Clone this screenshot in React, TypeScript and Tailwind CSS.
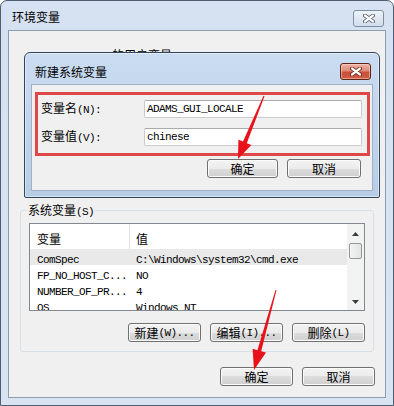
import type { ReactNode } from 'react'
import clsx from 'clsx'

const cjk = "font-['Noto_Sans_CJK_SC',sans-serif] text-[12px] leading-[14px] text-black"

// SimSun-like half width latin: 6px per char
function M({ children }: { children: ReactNode }) {
  return (
    <span className="font-['Liberation_Mono',monospace] text-[11px] tracking-[-0.6px]">
      {children}
    </span>
  )
}

function Button({ children, className }: { children: ReactNode; className?: string }) {
  return (
    <button
      className={clsx(
        'flex h-[19px] items-center justify-center whitespace-nowrap rounded-[3px] border border-[#707070]',
        'bg-[linear-gradient(#f3f3f3_0%,#ebebeb_50%,#dddddd_50%,#cfcfcf_100%)] shadow-[inset_0_0_0_1px_#fbfbfb]',
        cjk,
        className,
      )}
    >
      {children}
    </button>
  )
}

function CloseX({ outline }: { outline: string }) {
  return (
    <svg width="12" height="9" viewBox="0 0 12 9">
      <path d="M2 1.5 L10 7.5 M10 1.5 L2 7.5" stroke={outline} strokeWidth="4" strokeLinecap="round" />
      <path d="M2 1.5 L10 7.5 M10 1.5 L2 7.5" stroke="#fff" strokeWidth="2.2" strokeLinecap="round" />
    </svg>
  )
}

const rows = [
  ['ComSpec', 'C:\\Windows\\system32\\cmd.exe'],
  ['FP_NO_HOST_C...', 'NO'],
  ['NUMBER_OF_PR...', '4'],
  ['OS', 'Windows_NT'],
]

function NewVariableDialog() {
  return (
    <div className="absolute left-[23px] top-[51px] flex h-[146px] w-[356px] flex-col rounded-t-[6px] rounded-b-[2px] border border-[#34445a] bg-gradient-to-b from-[#cadcf1] to-[#b7cde7] px-[6px] pb-[6px] shadow-[inset_0_0_0_1px_rgba(255,255,255,0.45)]">
      <div className="flex h-[31px] items-start justify-between">
        <span className={clsx(cjk, 'pl-[4px] pt-[12px]')}>新建系统变量</span>
        <div className="mr-[2px] mt-[10px] flex h-[17px] w-[31px] items-center justify-center rounded-[3px] border border-[#5e2418] bg-[linear-gradient(#eeb4a6_0%,#df8b78_45%,#c9503a_55%,#cf5c44_100%)] shadow-[inset_0_0_0_1px_rgba(255,220,210,0.5)]">
          <CloseX outline="#6a2317" />
        </div>
      </div>
      <div className="flex flex-1 flex-col border border-[#9fb1c6] bg-[#f0f0f0] pl-[3px] pt-[7px]">
        <div className="flex h-[64px] w-[335px] flex-col gap-[10px] border-[3px] border-[#de4848] pl-[3px] pt-[5px]">
          <div className="flex items-center">
            <span className={clsx(cjk, 'w-[103px]')}>
              变量名<M>(N):</M>
            </span>
            <div className="flex h-[18px] w-[218px] items-center rounded-[2px] border border-[#c9cbce] border-t-[#a9abaf] bg-white pl-[2px]">
              <M>ADAMS_GUI_LOCALE</M>
            </div>
          </div>
          <div className="flex items-center">
            <span className={clsx(cjk, 'w-[103px]')}>
              变量值<M>(V):</M>
            </span>
            <div className="flex h-[18px] w-[218px] items-center rounded-[2px] border border-[#c9cbce] border-t-[#a9abaf] bg-white pl-[2px]">
              <M>chinese</M>
            </div>
          </div>
        </div>
        <div className="mt-[3px] flex justify-end gap-[9px] pr-[11px]">
          <Button className="w-[71px]">确定</Button>
          <Button className="w-[74px]">取消</Button>
        </div>
      </div>
    </div>
  )
}

function Arrows() {
  return (
    <svg className="pointer-events-none absolute left-[-1px] top-[-1px]" width="394" height="406">
      <polygon
        points="263.5,95.8 243,141.6 238.4,139.7 238,159 251.4,145.1 246.8,143.2 264.5,96.2"
        fill="#e8121b"
      />
      <polygon
        points="275.5,289.9 257.4,350.2 252.6,348.8 254,370 266,352.6 261.2,351.2 276.5,290.1"
        fill="#e8121b"
      />
    </svg>
  )
}

export default function App() {
  return (
    <div className="relative flex h-[406px] w-[394px] flex-col rounded-t-[7px] border border-[#4e5d70] bg-gradient-to-b from-[#d6e2f1] to-[#d9e4f2] px-[7px] pb-[7px]">
      <div className="flex h-[29px] items-start justify-between">
        <span className={clsx(cjk, 'pl-[4px] pt-[9px]')}>环境变量</span>
        <div className="mr-[2px] mt-[9px] flex h-[17px] w-[31px] items-center justify-center rounded-[3px] border border-[#7d8ea3] bg-gradient-to-b from-[#eef3f9] to-[#d2dceb]">
          <CloseX outline="#505c6b" />
        </div>
      </div>

      <div className="flex flex-1 flex-col border border-[#8d9cae] bg-[#f0f0f0]">
        <div className={clsx(cjk, 'h-[179px] pl-[19px] pt-[17px]')}>
          <M>Administrator </M>的用户变量<M>(U)</M>
        </div>

        <div className="relative mx-[11px] rounded-[3px] border border-[#d5dfe5] px-[8px] pb-[9px] pt-[12px]">
          <span className={clsx(cjk, 'absolute -top-[8px] left-[6px] bg-[#f0f0f0] px-[1px]')}>
            系统变量<M>(S)</M>
          </span>
          <div className="flex h-[88px] border border-[#828790] bg-white">
            <div className="flex min-w-0 flex-1 flex-col overflow-hidden">
              <div className="flex h-[25px] shrink-0">
                <span className={clsx(cjk, 'w-[99px] pl-[7px] pt-[8px]')}>变量</span>
                <span className="w-px bg-[#e3e3e3]" />
                <span className={clsx(cjk, 'pl-[6px] pt-[8px]')}>值</span>
              </div>
              {rows.map(([name, value], i) => (
                <div
                  key={name}
                  className={clsx('flex h-[16px] shrink-0 items-center whitespace-nowrap text-black', i === 0 && 'bg-[#e9e9e9]')}
                >
                  <span className="w-[100px] pl-[7px]">
                    <M>{name}</M>
                  </span>
                  <span className="pl-[6px]">
                    <M>{value}</M>
                  </span>
                </div>
              ))}
            </div>
            <div className="flex w-[17px] flex-col bg-[#f3f3f3] px-[2px]">
              <div className="flex h-[19px] items-center justify-center">
                <svg width="7" height="4" viewBox="0 0 7 4">
                  <path d="M0 4 L3.5 0 L7 4 Z" fill="#3c3c3c" />
                </svg>
              </div>
              <div className="h-[16px] rounded-[2px] border border-[#979797] bg-gradient-to-r from-[#f4f4f4] to-[#e2e2e2]" />
              <div className="flex-1" />
              <div className="flex h-[17px] items-center justify-center">
                <svg width="7" height="4" viewBox="0 0 7 4">
                  <path d="M0 0 L3.5 4 L7 0 Z" fill="#3c3c3c" />
                </svg>
              </div>
            </div>
          </div>
          <div className="mt-[12px] flex justify-end gap-[9px]">
            <Button className="w-[73px]">
              新建<M>(W)...</M>
            </Button>
            <Button className="w-[73px]">
              编辑<M>(I)...</M>
            </Button>
            <Button className="w-[73px]">
              删除<M>(L)</M>
            </Button>
          </div>
        </div>

        <div className="mr-[10px] mt-[15px] flex justify-end gap-[9px]">
          <Button className="w-[73px]">确定</Button>
          <Button className="w-[73px]">取消</Button>
        </div>
      </div>

      <NewVariableDialog />
      <Arrows />
    </div>
  )
}
